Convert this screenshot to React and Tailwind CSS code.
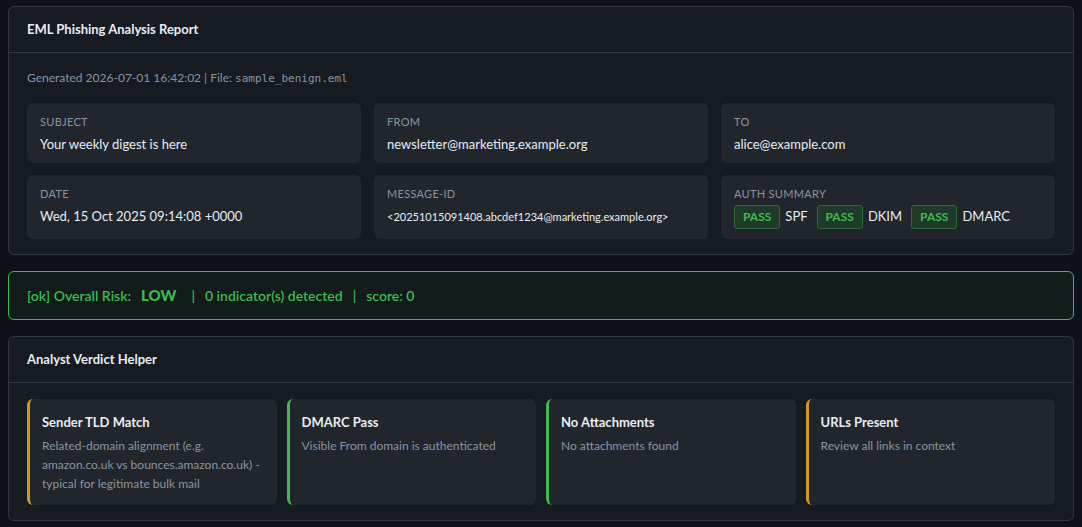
const Field = ({ label, children }) => (
    <div className="rounded-md bg-[#21262d] px-[13px] pt-[12px] pb-[10px] min-h-[60px]">
        <div className="text-[11px] uppercase tracking-[0.3px] text-[#8b949e] leading-[14px]">{label}</div>
        <div className="mt-[6px] text-[13px] text-[#e6edf3] leading-[18px]">{children}</div>
    </div>
);

const Pass = ({ name }) => (
    <span className="inline-flex items-center mr-[9px]">
        <span className="rounded-[3px] border border-[#2c6a3a] bg-[#1f3a28] px-[8px] py-[4px] text-[12px] font-bold leading-[14px] text-[#3fb950]">
            PASS
        </span>
        <span className="ml-[5px] text-[13px] text-[#e6edf3]">{name}</span>
    </span>
);

const Helper = ({ title, body, tone }) => (
    <div
        className={`rounded-md bg-[#21262d] border-l-[3px] px-[12px] pt-[14px] pb-[11px] min-h-[106px] ${
            tone === 'warn' ? 'border-[#d29922]' : 'border-[#3fb950]'
        }`}
    >
        <div className="text-[13px] font-bold text-[#e6edf3] leading-[18px]">{title}</div>
        <div className="mt-[5px] text-[12px] text-[#8b949e] leading-[19px]">{body}</div>
    </div>
);

const CardHeader = ({ children }) => (
    <div className="border-b border-[#30363d] px-[18px] pt-[13px] pb-[14px]">
        <h2 className="text-[13px] font-bold text-[#e6edf3] leading-[18px]">{children}</h2>
    </div>
);

export default function App() {
    return (
        <div
            className="min-h-screen bg-[#0e1117] px-[8px] pt-[6px] pb-[6px] space-y-[16px]"
            style={{ fontFamily: 'Lato, "Noto Sans", sans-serif' }}
        >
            <section className="rounded-md border border-[#30363d] bg-[#161b22]">
                <CardHeader>EML Phishing Analysis Report</CardHeader>
                <div className="px-[18px] pt-[17px] pb-[15px]">
                    <p className="text-[12px] text-[#8b949e] leading-[16px]">
                        Generated 2026-07-01 16:42:02 | File:{' '}
                        <code className="text-[11px]" style={{ fontFamily: '"DejaVu Sans Mono", monospace' }}>
                            sample_benign.eml
                        </code>
                    </p>
                    <div className="mt-[16px] grid grid-cols-3 gap-x-[13px] gap-y-[12px]">
                        <Field label="Subject">Your weekly digest is here</Field>
                        <Field label="From">newsletter@marketing.example.org</Field>
                        <Field label="To">alice@example.com</Field>
                        <Field label="Date">Wed, 15 Oct 2025 09:14:08 +0000</Field>
                        <Field label="Message-ID">
                            <span className="text-[11px]">&lt;20251015091408.abcdef1234@marketing.example.org&gt;</span>
                        </Field>
                        <div className="rounded-md bg-[#21262d] px-[13px] pt-[12px] pb-[10px]">
                            <div className="text-[11px] uppercase tracking-[0.3px] text-[#8b949e] leading-[14px]">Auth Summary</div>
                            <div className="mt-[4px] flex items-center">
                                <Pass name="SPF" />
                                <Pass name="DKIM" />
                                <Pass name="DMARC" />
                            </div>
                        </div>
                    </div>
                </div>
            </section>

            <div className="rounded-md border border-[#3fb950] bg-[#121c1a] px-[18px] py-[14px] text-[14px] font-semibold text-[#3fb950] leading-[18px]">
                [ok] Overall Risk:
                <span className="ml-[10px] mr-[15px] text-[15px] font-black">LOW</span>|
                <span className="ml-[10px] mr-[10px]">0 indicator(s) detected</span>|
                <span className="ml-[10px]">score: 0</span>
            </div>

            <section className="rounded-md border border-[#30363d] bg-[#161b22]">
                <CardHeader>Analyst Verdict Helper</CardHeader>
                <div className="px-[18px] pt-[16px] pb-[15px] grid grid-cols-4 gap-[10px]">
                    <Helper
                        tone="warn"
                        title="Sender TLD Match"
                        body="Related-domain alignment (e.g. amazon.co.uk vs bounces.amazon.co.uk) - typical for legitimate bulk mail"
                    />
                    <Helper tone="ok" title="DMARC Pass" body="Visible From domain is authenticated" />
                    <Helper tone="ok" title="No Attachments" body="No attachments found" />
                    <Helper tone="warn" title="URLs Present" body="Review all links in context" />
                </div>
            </section>
        </div>
    );
}
